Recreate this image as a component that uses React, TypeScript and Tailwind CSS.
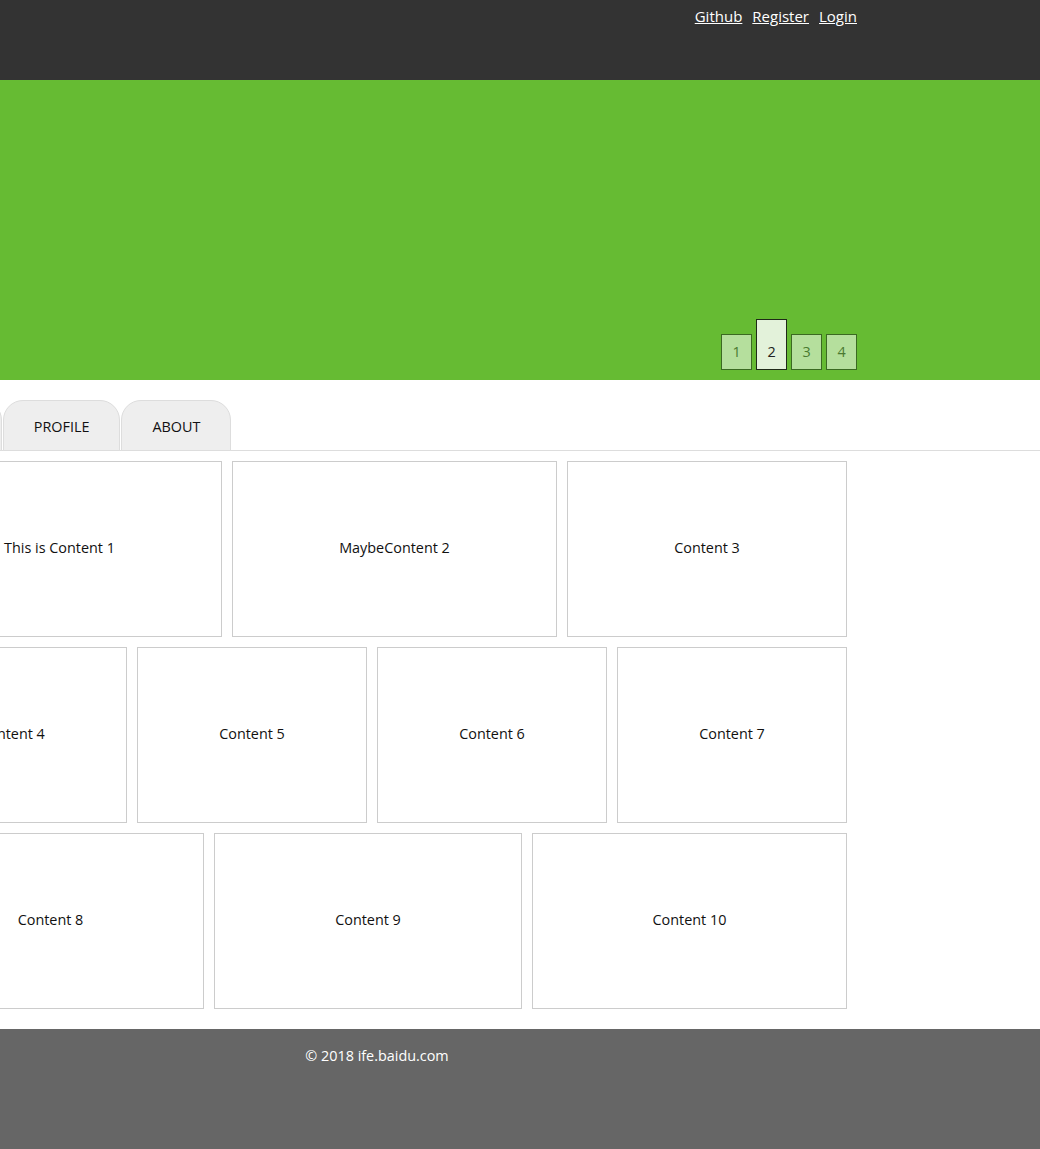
const rows = [
  [
    { text: "This is Content 1", w: "w-[325px]" },
    { text: "MaybeContent 2", w: "w-[325px]" },
    { text: "Content 3", w: "w-[280px]" },
  ],
  [
    { text: "Content 4", w: "w-[230px]" },
    { text: "Content 5", w: "w-[230px]" },
    { text: "Content 6", w: "w-[230px]" },
    { text: "Content 7", w: "w-[230px]" },
  ],
  [
    { text: "Content 8", w: "w-[307px]" },
    { text: "Content 9", w: "w-[308px]" },
    { text: "Content 10", w: "w-[315px]" },
  ],
];

export default function App() {
  return (
    <div className="min-h-screen overflow-hidden bg-white font-['Open_Sans',sans-serif] text-[14.4px] text-[#111]">
      {/* Header */}
      <header className="h-[80px] bg-[#333333]">
        <div className="ml-[-103px] flex w-[960px] justify-end gap-[10px] pt-[5px] text-[15px] text-white">
          <a href="#" className="underline">Github</a>
          <a href="#" className="underline">Register</a>
          <a href="#" className="underline">Login</a>
        </div>
      </header>

      {/* Banner */}
      <section className="h-[300px] bg-[#66bb33]">
        <div className="ml-[-103px] flex h-full w-[960px] items-end justify-end gap-[4px] pb-[10px]">
          {[1, 2, 3, 4].map((n) =>
            n === 2 ? (
              <span
                key={n}
                className="flex h-[51px] w-[31px] items-center justify-center border border-[#1f2a18] bg-[#e3f2da] pt-[14px] text-[#222]"
              >
                {n}
              </span>
            ) : (
              <span
                key={n}
                className="flex h-[36px] w-[31px] items-center justify-center border border-[#3b6a22] bg-[#b5df9d] text-[#4a7a30]"
              >
                {n}
              </span>
            )
          )}
        </div>
      </section>

      {/* Tabs */}
      <nav className="mt-[20px] border-b border-[#dddddd]">
        <div className="ml-[-103px] flex h-[50px] w-[960px] items-end gap-[1px]">
          {["HOME", "PROFILE", "ABOUT"].map((t) => (
            <button
              key={t}
              className="mb-[-1px] h-[51px] rounded-t-[20px] border border-[#dddddd] bg-[#eeeeee] px-[30px] pt-[3px] text-[14.4px] text-[#111]"
            >
              {t}
            </button>
          ))}
        </div>
      </nav>

      {/* Content */}
      <main className="ml-[-103px] w-[960px] pb-[20px]">
        {rows.map((row, i) => (
          <div key={i} className="mt-[10px] flex gap-[10px]">
            {row.map((c) => (
              <div
                key={c.text}
                className={`${c.w} flex h-[176px] items-center justify-center border border-[#cccccc] pb-[3px]`}
              >
                {c.text}
              </div>
            ))}
          </div>
        ))}
      </main>

      {/* Footer */}
      <footer className="h-[120px] bg-[#666666]">
        <div className="ml-[-103px] w-[960px] pt-[16px] text-center text-white">
          &copy; 2018 ife.baidu.com
        </div>
      </footer>
    </div>
  );
}
